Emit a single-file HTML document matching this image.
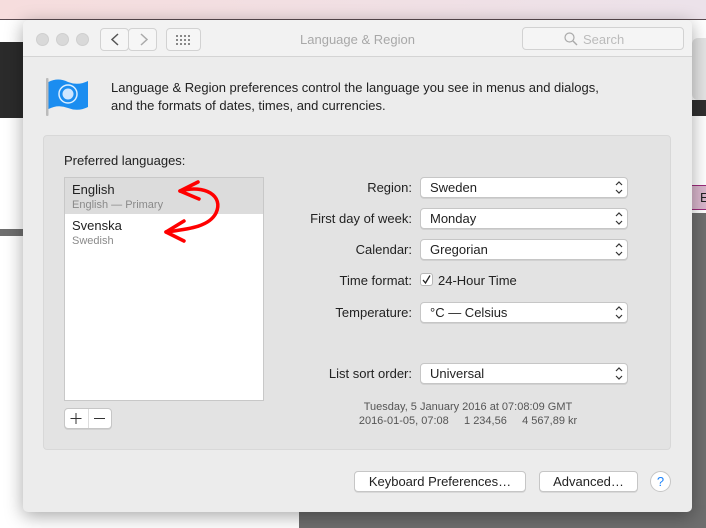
<!DOCTYPE html>
<html><head><meta charset="utf-8"><style>
*{margin:0;padding:0;box-sizing:border-box}
body{width:706px;height:528px;position:relative;overflow:hidden;background:#fff;font-family:"Liberation Sans",sans-serif;font-size:13px;color:#222}
.abs{position:absolute}
.win{left:23px;top:20px;width:669px;height:492px;background:#ececec;border-radius:5px;box-shadow:0 4px 18px rgba(0,0,0,.35);overflow:hidden}
.tb{left:0;top:0;width:669px;height:37px;background:#f2f2f2;border-bottom:1px solid #d4d4d4}
.tl{width:13px;height:13px;border-radius:50%;background:#d9d9d9;border:1px solid #cfcfcf;top:13px}
.btn{background:#f6f6f6;border:1px solid #d2d2d2;border-radius:4px}
.pop{left:397px;width:208px;height:21px;background:#fff;border:1px solid #c6c6c6;border-radius:4px;box-shadow:0 1px 0 rgba(0,0,0,.08);padding-left:9px;line-height:19px;font-size:13px}
.lab{right:280px;text-align:right;font-size:13px;line-height:21px}
.pb{background:#fff;border:1px solid #c6c6c6;border-radius:4px;box-shadow:0 1px 0 rgba(0,0,0,.08);text-align:center;line-height:19px;font-size:13px}
</style></head><body>
<div class="abs" style="left:0;top:0;width:706px;height:19px;background:linear-gradient(90deg,#f6dddd,#ece2ea)"></div>
<div class="abs" style="left:0;top:19px;width:706px;height:1px;background:#5a4a50"></div>
<div class="abs" style="left:0;top:42px;width:23px;height:76px;background:#2b2b2b"></div>
<div class="abs" style="left:0;top:229px;width:23px;height:7px;background:#6e6e6e"></div>
<div class="abs" style="left:692px;top:38px;width:14px;height:62px;background:#e4e4e4;border-radius:6px 0 0 6px"></div>
<div class="abs" style="left:692px;top:100px;width:14px;height:16px;background:#303030"></div>
<div class="abs" style="left:692px;top:185px;width:14px;height:25px;background:#d9b6cc;border-top:1px solid #9b2a7a;border-bottom:1px solid #9b2a7a;font-size:13px;line-height:23px;padding-left:8px">E</div>
<div class="abs" style="left:692px;top:213px;width:14px;height:315px;background:#6f6f6f"></div>
<div class="abs" style="left:299px;top:505px;width:407px;height:23px;background:#6e6e6e"></div>

<div class="abs win">
 <div class="abs tb">
  <div class="abs tl" style="left:13px"></div><div class="abs tl" style="left:33px"></div><div class="abs tl" style="left:53px"></div>
  <div class="abs btn" style="left:77px;top:8px;width:29px;height:23px"></div>
  <div class="abs btn" style="left:105px;top:8px;width:29px;height:23px"></div>
  <svg class="abs" style="left:77px;top:8px" width="58" height="23"><path d="M18 6 L12 11.5 L18 17" stroke="#555" stroke-width="1.5" fill="none"/><path d="M41 6 L47 11.5 L41 17" stroke="#aaa" stroke-width="1.5" fill="none"/></svg>
  <div class="abs btn" style="left:143px;top:8px;width:35px;height:23px"></div>
  <svg class="abs" style="left:153px;top:15px" width="16" height="10"><g fill="#888"><rect x="0" y="0" width="2" height="2"/><rect x="4" y="0" width="2" height="2"/><rect x="8" y="0" width="2" height="2"/><rect x="12" y="0" width="2" height="2"/><rect x="0" y="4" width="2" height="2"/><rect x="4" y="4" width="2" height="2"/><rect x="8" y="4" width="2" height="2"/><rect x="12" y="4" width="2" height="2"/><rect x="0" y="8" width="2" height="2"/><rect x="4" y="8" width="2" height="2"/><rect x="8" y="8" width="2" height="2"/><rect x="12" y="8" width="2" height="2"/></g></svg>
  <div class="abs" style="left:0;width:669px;top:12px;text-align:center;color:#a8a8a8;font-size:13px">Language &amp; Region</div>
  <div class="abs btn" style="left:499px;top:7px;width:162px;height:23px;background:#f5f5f5"></div>
  <svg class="abs" style="left:541px;top:12px" width="14" height="14"><circle cx="5.5" cy="5.5" r="4.5" stroke="#aaa" stroke-width="1.2" fill="none"/><path d="M9 9 L13 13" stroke="#aaa" stroke-width="1.4"/></svg>
  <div class="abs" style="left:560px;top:12px;color:#bbb;font-size:13px">Search</div>
 </div>
 <svg class="abs" style="left:23px;top:57px" width="44" height="40"><rect x="0" y="1" width="2.5" height="38" rx="1" fill="#bbb"/><path d="M2.5 5 Q12 0 22 5 Q32 9 42 4 L42 30 Q32 35 22 31 Q12 27 2.5 32Z" fill="#1b8df0"/><circle cx="22" cy="17" r="9" fill="none" stroke="#dbeeff" stroke-width="1.5"/><circle cx="22" cy="17" r="5.5" fill="#cfe6ff"/></svg>
 <div class="abs" style="left:88px;top:59px;font-size:13px;line-height:18px;color:#222">Language &amp; Region preferences control the language you see in menus and dialogs,<br>and the formats of dates, times, and currencies.</div>

 <div class="abs" style="left:20px;top:115px;width:628px;height:315px;background:#e3e3e3;border:1px solid #d8d8d8;border-radius:4px"></div>
 <div class="abs" style="left:41px;top:133px;font-size:13px">Preferred languages:</div>
 <div class="abs" style="left:41px;top:157px;width:200px;height:224px;background:#fff;border:1px solid #c8c8c8">
  <div style="background:#dcdcdc;height:36px;padding:5px 0 0 7px;line-height:14px">English<br><span style="color:#8a8a8a;font-size:11px">English — Primary</span></div>
  <div style="height:36px;padding:5px 0 0 7px;line-height:14px">Svenska<br><span style="color:#8a8a8a;font-size:11px">Swedish</span></div>
 </div>
 <div class="abs pb" style="left:41px;top:388px;width:48px;height:21px"></div>
 <div class="abs" style="left:65px;top:389px;width:1px;height:19px;background:#ddd"></div>
 <svg class="abs" style="left:41px;top:388px" width="48" height="21"><path d="M12 5 V16 M6.5 10.5 H17.5" stroke="#333" stroke-width="1"/><path d="M30 10.5 H41" stroke="#333" stroke-width="1"/></svg>

 <div class="abs lab" style="top:157px">Region:</div>
 <div class="abs lab" style="top:188px">First day of week:</div>
 <div class="abs lab" style="top:219px">Calendar:</div>
 <div class="abs lab" style="top:250px">Time format:</div>
 <div class="abs lab" style="top:282px">Temperature:</div>
 <div class="abs lab" style="top:343px">List sort order:</div>
 <div class="abs pop" style="top:157px">Sweden</div>
 <div class="abs pop" style="top:188px">Monday</div>
 <div class="abs pop" style="top:219px">Gregorian</div>
 <div class="abs pop" style="top:282px">°C — Celsius</div>
 <div class="abs pop" style="top:343px">Universal</div>
 <svg class="abs" style="left:591px;top:157px" width="10" height="210"><g stroke="#333" stroke-width="1.2" fill="none">
 <path d="M2 8 L5 5 L8 8 M2 13 L5 16 L8 13"/><path d="M2 39 L5 36 L8 39 M2 44 L5 47 L8 44"/><path d="M2 70 L5 67 L8 70 M2 75 L5 78 L8 75"/><path d="M2 133 L5 130 L8 133 M2 138 L5 141 L8 138"/><path d="M2 194 L5 191 L8 194 M2 199 L5 202 L8 199"/></g></svg>
 <div class="abs" style="left:397px;top:253px;width:13px;height:13px;background:#fff;border:1px solid #b8b8b8;border-radius:3px"></div>
 <svg class="abs" style="left:397px;top:253px" width="13" height="13"><path d="M3 7 L5.5 10 L10 2.5" stroke="#222" stroke-width="1.3" fill="none"/></svg>
 <div class="abs" style="left:415px;top:253px;font-size:13px">24-Hour Time</div>
 <div class="abs" style="left:260px;width:370px;top:380px;text-align:center;font-size:11px;line-height:14px;color:#555">Tuesday, 5 January 2016 at 07:08:09 GMT<br>2016-01-05, 07:08 &nbsp;&nbsp;&nbsp;&nbsp;1 234,56 &nbsp;&nbsp;&nbsp;&nbsp;4 567,89 kr</div>

 <div class="abs pb" style="left:331px;top:451px;width:172px;height:21px">Keyboard Preferences…</div>
 <div class="abs pb" style="left:516px;top:451px;width:99px;height:21px">Advanced…</div>
 <div class="abs" style="left:627px;top:451px;width:21px;height:21px;border-radius:50%;background:#fff;border:1px solid #c6c6c6;color:#1a82fb;text-align:center;line-height:19px;font-size:13px">?</div>
</div>
<svg class="abs" style="left:0;top:0" width="706" height="528"><g stroke="#f00" stroke-width="3.5" fill="none" stroke-linecap="round">
<path d="M180 191 C205 184 224 196 216 213 C209 227 188 229 166 232"/>
<path d="M180 191 L198 182 M180 191 L199 199"/>
<path d="M166 232 L184 221 M166 232 L184 241"/></g></svg>
</body></html>
